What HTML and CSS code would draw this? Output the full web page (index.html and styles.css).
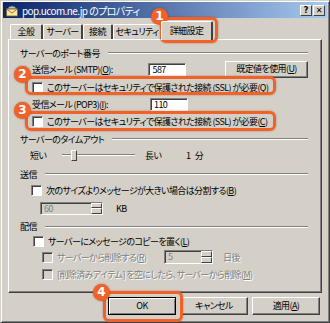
FILE: index.html
```html
<!DOCTYPE html>
<html lang="ja">
<head>
    <meta charset="UTF-8">
    <title>pop.ucom.ne.jp のプロパティ</title>
    <link rel="stylesheet" href="styles.css">
</head>
<body>
    <div class="window">
        <div class="titlebar">
            <svg class="app-icon" width="14" height="14" viewBox="0 0 14 14">
                <path d="M2 6 Q7 0 12 6 Z" fill="#c0c0c0" stroke="#606060" stroke-width="0.8"/>
                <rect x="1.5" y="6" width="11" height="7" fill="#f8e8a0" stroke="#806020" stroke-width="0.8"/>
                <path d="M1.5 6 L7 10 L12.5 6" fill="none" stroke="#806020" stroke-width="0.8"/>
            </svg>
            <span class="title">pop.ucom.ne.jp のプロパティ</span>
            <div class="title-buttons">
                <span class="tbtn">?</span>
                <span class="tbtn">✕</span>
            </div>
        </div>

        <div class="tabs">
            <div class="tab t1">全般</div>
            <div class="tab t2">サーバー</div>
            <div class="tab t3">接続</div>
            <div class="tab t4">セキュリティ</div>
            <div class="tab active">詳細設定</div>
        </div>

        <div class="panel">
            <div class="group r-first">
                <span>サーバーのポート番号</span>
                <div class="groove"></div>
            </div>
            <div class="row r-smtp">
                <span class="port-label">送信メール (SMTP)(<u>O</u>):</span>
                <span class="field">587</span>
                <span class="button defaults">既定値を使用(<u>U</u>)</span>
            </div>
            <div class="row r-check">
                <span class="box"></span>
                <span>このサーバーはセキュリティで保護された接続 (SSL) が必要(<u>Q</u>)</span>
            </div>
            <div class="row r-pop">
                <span class="port-label">受信メール (POP3)(<u>I</u>):</span>
                <span class="field">110</span>
            </div>
            <div class="row r-check">
                <span class="box"></span>
                <span>このサーバーはセキュリティで保護された接続 (SSL) が必要(<u>C</u>)</span>
            </div>

            <div class="group r-timeout">
                <span>サーバーのタイムアウト</span>
                <div class="groove"></div>
            </div>
            <div class="row r-slider">
                <span class="short">短い</span>
                <div class="slider">
                    <div class="track"></div>
                    <div class="thumb"></div>
                </div>
                <span class="long">長い</span>
                <span class="minutes">1 分</span>
            </div>

            <div class="group r-send">
                <span>送信</span>
                <div class="groove"></div>
            </div>
            <div class="row r-split">
                <span class="box"></span>
                <span>次のサイズよりメッセージが大きい場合は分割する(<u>B</u>)</span>
            </div>
            <div class="row r-size">
                <span class="spin size-spin disabled-field">
                    <span class="spin-value">60</span>
                    <span class="spin-arrows"><i></i><i></i></span>
                </span>
                <span class="unit">KB</span>
            </div>

            <div class="group r-deliver">
                <span>配信</span>
                <div class="groove"></div>
            </div>
            <div class="row r-copy">
                <span class="box"></span>
                <span>サーバーにメッセージのコピーを置く(<u>L</u>)</span>
            </div>
            <div class="row r-remove">
                <span class="box disabled"></span>
                <span class="dim remove-text">サーバーから削除する(<u>R</u>)</span>
                <span class="spin day-spin disabled-field">
                    <span class="spin-value">5</span>
                    <span class="spin-arrows"><i></i><i></i></span>
                </span>
                <span class="dim">日後</span>
            </div>
            <div class="row r-empty">
                <span class="box disabled"></span>
                <span class="dim">[削除済みアイテム] を空にしたら、サーバーから削除(<u>M</u>)</span>
            </div>
        </div>

        <div class="footer">
            <span class="button default">OK</span>
            <span class="button">キャンセル</span>
            <span class="button">適用(<u>A</u>)</span>
        </div>

        <!-- annotation overlays -->
        <div class="mark m1"></div>
        <div class="mark m2"></div>
        <div class="mark m3"></div>
        <div class="mark m4"></div>
        <div class="badge b1">1</div>
        <div class="badge b2">2</div>
        <div class="badge b3">3</div>
        <div class="badge b4">4</div>
    </div>
</body>
</html>
```

FILE: styles.css
```css
body {
    margin: 0;
    font-family: "Noto Sans CJK JP", "DejaVu Sans", sans-serif;
    font-size: 9px;
    letter-spacing: -0.6px;
    font-feature-settings: "palt";
    color: #000;
    background: #fff;
}

.window {
    position: relative;
    width: 330px;
    height: 323px;
    box-sizing: border-box;
    background-color: #d4d0c8;
    border-top: 1px solid #d4d0c8;
    border-left: 1px solid #d4d0c8;
    border-right: 1px solid #404040;
    border-bottom: 1px solid #404040;
    box-shadow: inset 1px 1px #fff, inset -1px -1px #808080;
    padding: 1px 2px;
    overflow: hidden;
    white-space: nowrap;
}

/* title bar */
.titlebar {
    display: flex;
    align-items: center;
    height: 16px;
    padding: 0 2px 0 2px;
    background: linear-gradient(to right, #0a246a, #a6caf0);
}

.app-icon {
    flex: none;
}

.title {
    margin-left: 3px;
    color: #fff;
    font-size: 10px;
    letter-spacing: -0.6px;
    flex: 1;
}

.title-buttons {
    display: flex;
    gap: 1px;
}

.tbtn {
    width: 12px;
    height: 11px;
    box-sizing: border-box;
    background-color: #d4d0c8;
    border-top: 1px solid #fff;
    border-left: 1px solid #fff;
    border-right: 1px solid #404040;
    border-bottom: 1px solid #404040;
    font-family: "DejaVu Sans", sans-serif;
    font-size: 8px;
    font-weight: bold;
    letter-spacing: 0;
    line-height: 9px;
    text-align: center;
}

/* tabs */
.tabs {
    display: flex;
    align-items: flex-end;
    height: 20px;
    margin-top: 1px;
    padding-left: 7px;
}

.tab {
    height: 15px;
    box-sizing: border-box;
    border-top: 1px solid #fff;
    border-left: 1px solid #fff;
    border-right: 2px solid #404040;
    border-radius: 2px 2px 0 0;
    text-align: center;
    line-height: 14px;
}

.t1 { width: 33px; }
.t2 { width: 40px; }
.t3 { width: 30px; }
.t4 { width: 49px; }

.tab.active {
    position: relative;
    width: 52px;
    height: 19px;
    margin-left: -1px;
    margin-bottom: -1px;
    line-height: 18px;
    background-color: #d4d0c8;
    z-index: 1;
}

/* property page */
.panel {
    margin-left: 5px;
    width: 314px;
    height: 254px;
    box-sizing: border-box;
    border-top: 1px solid #fff;
    border-left: 1px solid #fff;
    border-right: 1px solid #404040;
    border-bottom: 1px solid #404040;
    box-shadow: inset -1px -1px #808080;
    padding: 6px 13px 0 11px;
}

.row,
.group {
    display: flex;
    align-items: center;
}

.group .groove {
    flex: 1;
    margin-left: 8px;
    border-top: 1px solid #808080;
    border-bottom: 1px solid #fff;
}

.r-first { height: 14px; }
.r-smtp { height: 18px; padding-left: 12px; }
.r-check { height: 18px; padding-left: 12px; }
.r-pop { height: 16px; padding-left: 12px; }
.r-timeout { height: 18px; }
.r-slider { height: 14px; padding-left: 10px; }
.r-send { height: 16px; margin-top: 4px; }
.r-split { height: 17px; padding-left: 11px; }
.r-size { height: 18px; padding-left: 20px; }
.r-deliver { height: 15px; margin-top: 2px; }
.r-copy { height: 14px; padding-left: 13px; }
.r-remove { height: 18px; padding-left: 22px; }
.r-empty { height: 16px; padding-left: 22px; }

.port-label {
    width: 118px;
}

.field {
    width: 38px;
    height: 13px;
    box-sizing: border-box;
    background-color: #fff;
    border-top: 1px solid #808080;
    border-left: 1px solid #808080;
    border-right: 1px solid #fff;
    border-bottom: 1px solid #fff;
    box-shadow: inset 1px 1px #404040;
    padding-left: 3px;
    line-height: 11px;
}

.button {
    display: inline-block;
    box-sizing: border-box;
    height: 17px;
    background-color: #d4d0c8;
    border-top: 1px solid #fff;
    border-left: 1px solid #fff;
    border-right: 1px solid #404040;
    border-bottom: 1px solid #404040;
    box-shadow: inset -1px -1px #808080;
    text-align: center;
    line-height: 14px;
}

.defaults {
    width: 84px;
    margin-left: 39px;
}

.box {
    width: 11px;
    height: 11px;
    flex: none;
    box-sizing: border-box;
    background-color: #fff;
    border-top: 1px solid #808080;
    border-left: 1px solid #808080;
    border-right: 1px solid #fff;
    border-bottom: 1px solid #fff;
    box-shadow: inset 1px 1px #404040;
    margin-right: 4px;
}

.box.disabled {
    background-color: #d4d0c8;
}

.dim {
    color: #808080;
    text-shadow: 1px 1px #fff;
}

/* slider */
.short {
    width: 32px;
}

.slider {
    position: relative;
    width: 73px;
    height: 12px;
}

.track {
    position: absolute;
    left: 0;
    right: 0;
    top: 5px;
    height: 2px;
    border-top: 1px solid #808080;
    border-bottom: 1px solid #fff;
    box-sizing: border-box;
}

.thumb {
    position: absolute;
    left: 9px;
    top: 1px;
    width: 4px;
    height: 9px;
    background-color: #d4d0c8;
    border-top: 1px solid #fff;
    border-left: 1px solid #fff;
    border-right: 1px solid #404040;
    border-bottom: 1px solid #404040;
}

.long {
    margin-left: 10px;
    width: 41px;
}

.minutes {
    word-spacing: 3px;
}

/* spin boxes */
.spin {
    display: flex;
    box-sizing: border-box;
    height: 13px;
    border-top: 1px solid #808080;
    border-left: 1px solid #808080;
    border-right: 1px solid #fff;
    border-bottom: 1px solid #fff;
    box-shadow: inset 1px 1px #404040;
}

.disabled-field {
    background-color: #d4d0c8;
    color: #808080;
}

.spin-value {
    flex: 1;
    padding-left: 3px;
    line-height: 11px;
}

.spin-arrows {
    display: flex;
    flex-direction: column;
    width: 11px;
}

.spin-arrows i {
    flex: 1;
    border-top: 1px solid #fff;
    border-left: 1px solid #fff;
    border-right: 1px solid #404040;
    border-bottom: 1px solid #404040;
}

.size-spin {
    width: 63px;
}

.unit {
    margin-left: 13px;
}

.remove-text {
    width: 107px;
}

.day-spin {
    width: 49px;
    height: 14px;
}

.r-remove .day-spin + .dim {
    margin-left: 10px;
}

/* dialog buttons */
.footer {
    display: flex;
    gap: 4px;
    padding: 4px 0 0 105px;
}

.footer .button {
    width: 68px;
    height: 18px;
    line-height: 15px;
}

.footer .button.default {
    border: 1px solid #000;
    box-shadow: inset 1px 1px #fff, inset -1px -1px #808080;
}

/* annotations */
.mark {
    position: absolute;
    border: 3px solid #f0622a;
    border-radius: 6px;
    box-shadow: 0 0 2px rgba(120, 40, 0, 0.5);
}

.m1 { left: 159px; top: 16px; width: 52px; height: 20px; }
.m2 { left: 24px; top: 75px; width: 245px; height: 13px; }
.m3 { left: 24px; top: 110px; width: 245px; height: 14px; }
.m4 { left: 102px; top: 290px; width: 74px; height: 25px; }

.badge {
    position: absolute;
    width: 17px;
    height: 17px;
    border-radius: 50%;
    background-color: #f0622a;
    color: #fff;
    font-family: "DejaVu Sans", sans-serif;
    font-weight: bold;
    font-size: 12px;
    letter-spacing: 0;
    line-height: 17px;
    text-align: center;
    box-shadow: 0 0 2px rgba(120, 40, 0, 0.6);
}

.b1 { left: 150px; top: 7px; }
.b2 { left: 13px; top: 65px; }
.b3 { left: 13px; top: 101px; }
.b4 { left: 92px; top: 283px; }
```
